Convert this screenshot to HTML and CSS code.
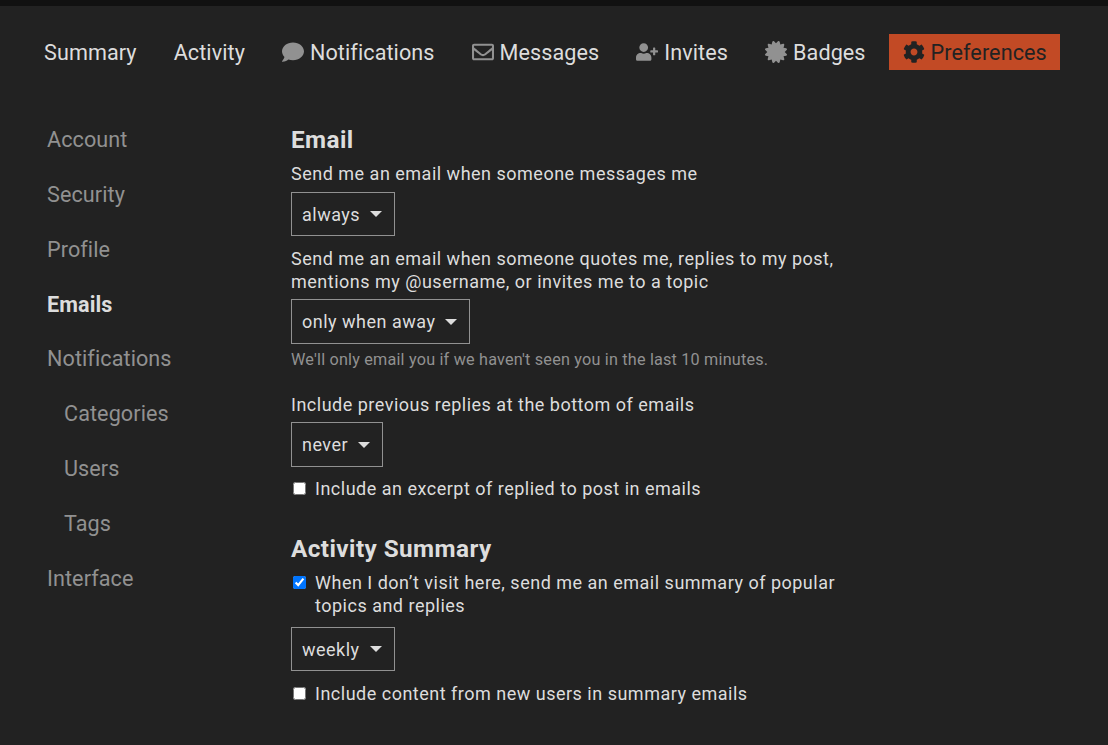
FILE: index.html
```html
<!DOCTYPE html>
<html lang="en">
<head>
<meta charset="utf-8">
<title>Preferences - Emails</title>
<link rel="stylesheet" href="styles.css">
</head>
<body>
<div class="topbar"></div>
<nav class="tabs">
  <a class="tab">Summary</a>
  <a class="tab">Activity</a>
  <a class="tab"><svg class="icon" viewBox="0 0 512 512"><path d="M256 32C114.6 32 0 125.1 0 240c0 49.6 21.4 95 57 130.7C44.5 421.1 2.7 466 2.2 466.5c-2.2 2.3-2.8 5.7-1.5 8.7S4.8 480 8 480c66.3 0 116-31.8 140.6-51.4 32.7 12.3 69 19.4 107.4 19.4 141.4 0 256-93.1 256-208S397.4 32 256 32z"/></svg>Notifications</a>
  <a class="tab"><svg class="icon" viewBox="0 0 512 512"><path d="M464 64H48C21.49 64 0 85.49 0 112v288c0 26.51 21.49 48 48 48h416c26.51 0 48-21.49 48-48V112c0-26.51-21.49-48-48-48zm0 48v40.805c-22.422 18.259-58.168 46.651-134.587 106.49-16.841 13.247-50.201 45.072-73.413 44.701-23.208.375-56.579-31.459-73.413-44.701C106.18 199.465 70.425 171.067 48 152.805V112h416zM48 400V214.398c22.914 18.251 55.409 43.862 104.938 82.646 21.857 17.205 60.134 55.186 103.062 54.955 42.717.231 80.509-37.199 103.053-54.947 49.528-38.783 82.032-64.401 104.947-82.653V400H48z"/></svg>Messages</a>
  <a class="tab"><svg class="icon" viewBox="0 0 640 512"><path d="M624 208h-64v-64c0-8.8-7.2-16-16-16h-32c-8.8 0-16 7.2-16 16v64h-64c-8.8 0-16 7.2-16 16v32c0 8.8 7.2 16 16 16h64v64c0 8.8 7.2 16 16 16h32c8.8 0 16-7.2 16-16v-64h64c8.8 0 16-7.2 16-16v-32c0-8.8-7.2-16-16-16zm-400 48c70.7 0 128-57.3 128-128S294.7 0 224 0 96 57.3 96 128s57.3 128 128 128zm89.6 32h-16.7c-22.2 10.2-46.9 16-72.9 16s-50.6-5.8-72.9-16h-16.7C60.2 288 0 348.2 0 422.4V464c0 26.5 21.5 48 48 48h352c26.5 0 48-21.5 48-48v-41.6c0-74.2-60.2-134.4-134.4-134.4z"/></svg>Invites</a>
  <a class="tab"><svg class="icon" viewBox="0 0 512 512"><path d="M458.622 255.92l45.985-45.005c13.708-12.977 7.316-36.039-10.664-40.339l-62.65-15.99 17.661-62.015c4.991-17.838-11.829-34.663-29.661-29.671l-61.994 17.667-15.984-62.671C337.085.197 313.765-6.276 300.99 7.228L256 53.57 211.011 7.229c-12.63-13.351-36.047-7.234-40.325 10.668l-15.984 62.671-61.995-17.667C74.87 57.907 58.056 74.738 63.046 92.572l17.661 62.015-62.65 15.99C.069 174.878-6.31 197.944 7.392 210.915l45.985 45.005-45.985 45.004c-13.708 12.977-7.316 36.039 10.664 40.339l62.65 15.99-17.661 62.015c-4.991 17.838 11.829 34.663 29.661 29.671l61.994-17.667 15.984 62.671c4.439 18.575 27.696 24.018 40.325 10.668L256 458.61l44.989 46.001c12.5 13.488 35.987 7.486 40.325-10.668l15.984-62.671 61.994 17.667c17.836 4.994 34.651-11.837 29.661-29.671l-17.661-62.015 62.65-15.99c17.987-4.302 24.366-27.367 10.664-40.339l-45.984-45.004z"/></svg>Badges</a>
  <a class="tab tab-active"><svg class="icon" viewBox="0 0 512 512"><path d="M487.4 315.7l-42.6-24.6c4.3-23.2 4.3-47 0-70.2l42.6-24.6c4.9-2.8 7.1-8.6 5.5-14-11.1-35.6-30-67.8-54.7-94.6-3.8-4.1-10-5.1-14.8-2.3L380.8 110c-17.9-15.4-38.5-27.3-60.8-35.1V25.8c0-5.6-3.9-10.5-9.4-11.7-36.7-8.2-74.3-7.8-109.2 0-5.5 1.2-9.4 6.1-9.4 11.7V75c-22.2 7.9-42.8 19.8-60.8 35.1L88.7 85.5c-4.9-2.8-11-1.9-14.8 2.3-24.7 26.7-43.6 58.9-54.7 94.6-1.7 5.4.6 11.2 5.5 14L67.3 221c-4.3 23.2-4.3 47 0 70.2l-42.6 24.6c-4.9 2.8-7.1 8.6-5.5 14 11.1 35.6 30 67.8 54.7 94.6 3.8 4.1 10 5.1 14.8 2.3l42.6-24.6c17.9 15.4 38.5 27.3 60.8 35.1v49.2c0 5.6 3.9 10.5 9.4 11.7 36.7 8.2 74.3 7.8 109.2 0 5.5-1.2 9.4-6.1 9.4-11.7v-49.2c22.2-7.9 42.8-19.8 60.8-35.1l42.6 24.6c4.9 2.8 11 1.9 14.8-2.3 24.7-26.7 43.6-58.9 54.7-94.6 1.5-5.5-.7-11.3-5.6-14.1zM256 336c-44.1 0-80-35.9-80-80s35.9-80 80-80 80 35.9 80 80-35.9 80-80 80z"/></svg>Preferences</a>
</nav>
<div class="layout">
  <aside class="side">
    <a class="side-link">Account</a>
    <a class="side-link">Security</a>
    <a class="side-link">Profile</a>
    <a class="side-link side-active">Emails</a>
    <a class="side-link">Notifications</a>
    <a class="side-link side-sub">Categories</a>
    <a class="side-link side-sub">Users</a>
    <a class="side-link side-sub">Tags</a>
    <a class="side-link">Interface</a>
  </aside>
  <main class="content">
    <h2 class="heading">Email</h2>
    <p class="label">Send me an email when someone messages me</p>
    <button class="drop">always<span class="caret"></span></button>
    <p class="label label-next">Send me an email when someone quotes me, replies to my post, mentions my @username, or invites me to a topic</p>
    <button class="drop drop-tall">only when away<span class="caret"></span></button>
    <p class="hint">We'll only email you if we haven't seen you in the last 10 minutes.</p>
    <p class="label label-sec">Include previous replies at the bottom of emails</p>
    <button class="drop drop-tall">never<span class="caret"></span></button>
    <label class="check check-first"><input type="checkbox"><span>Include an excerpt of replied to post in emails</span></label>
    <h2 class="heading heading-sec">Activity Summary</h2>
    <label class="check check-lead"><input type="checkbox" checked><span>When I don’t visit here, send me an email summary of popular topics and replies</span></label>
    <button class="drop drop-mid">weekly<span class="caret"></span></button>
    <label class="check check-last"><input type="checkbox"><span>Include content from new users in summary emails</span></label>
  </main>
</div>
</body>
</html>
```
FILE: styles.css
```css
* { box-sizing: border-box; }
html, body { margin: 0; padding: 0; height: 100%; }
body {
  background: #222222;
  color: #dddddd;
  font-family: Roboto, "Liberation Sans", sans-serif;
  font-size: 18px;
  line-height: 23px;
  letter-spacing: 0.5px;
  overflow: hidden;
}
.topbar { height: 6px; background: #111111; }
.tabs {
  display: flex;
  align-items: center;
  gap: 10px;
  height: 36px;
  margin-top: 28px;
  padding-left: 30px;
}
.tab {
  display: flex;
  align-items: center;
  height: 36px;
  padding: 0 13px 0 14px;
  font-size: 21.6px;
  letter-spacing: 0.08px;
  color: #dddddd;
  white-space: nowrap;
}
.tab-active { background: #c24a25; color: #222222; }
.icon { width: 22px; height: 22px; margin-right: 6px; fill: #919191; flex: none; }
.tab-active .icon { fill: #222222; }
.layout { display: flex; margin-top: 43px; }
.side { width: 291px; padding-left: 47px; flex: none; display: flex; flex-direction: column; }
.side-link { height: 54.85px; font-size: 21.6px; letter-spacing: 0.08px; line-height: 54.85px; color: #919191; }
.side-sub { padding-left: 17px; }
.side-active { color: #dddddd; font-weight: 700; }
.content { width: 560px; padding-top: 13px; display: flex; flex-direction: column; align-items: flex-start; }
.heading { margin: 0; font-size: 24.3px; letter-spacing: 0.42px; line-height: 27px; font-weight: 700; color: #dddddd; }
.heading-sec { margin-top: 35px; }
.label { margin: 9px 0 7px; }
.label-next { margin: 11px 0 6px; }
.label-sec { margin: 22px 0 6px; }
.drop {
  display: flex;
  align-items: center;
  height: 44px;
  padding: 0 12px 0 10px;
  background: transparent;
  border: 1px solid #919191;
  border-radius: 0;
  color: #dddddd;
  font: inherit;
  letter-spacing: inherit;
}
.drop-tall { height: 45px; }
.drop-mid { margin-top: 10px; }
.caret {
  width: 0;
  height: 0;
  margin-left: 10px;
  border-left: 6px solid transparent;
  border-right: 6px solid transparent;
  border-top: 6px solid #dddddd;
}
.hint { margin: 4px 0 0; font-size: 16.2px; letter-spacing: 0.2px; color: #919191; }
.check { display: flex; align-items: flex-start; }
.check input { width: 13px; height: 13px; margin: 5px 9px 0 2px; flex: none; }
.check-first { margin-top: 10px; }
.check-lead { margin-top: 9px; }
.check-last { margin-top: 11px; }
```
